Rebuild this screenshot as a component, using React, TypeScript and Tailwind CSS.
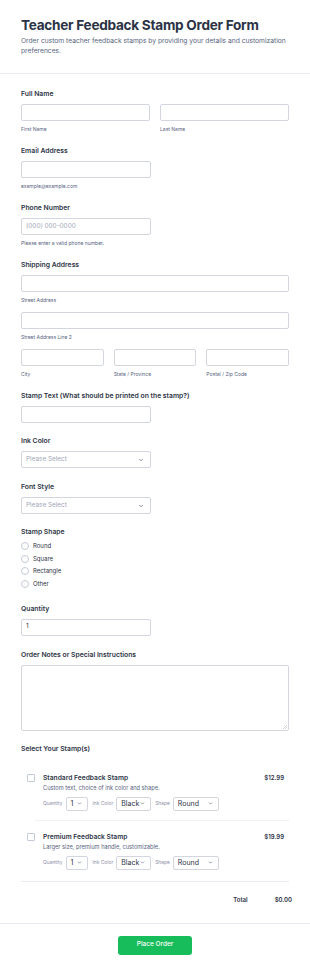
import { ChevronDown } from "lucide-react";

const font = { fontFamily: "Inter, 'Noto Sans', sans-serif" };

function Label({ children }: { children: React.ReactNode }) {
  return <div className="mb-[5px] text-[6.8px] font-semibold leading-[10px] text-[#2c3345]">{children}</div>;
}

function Sub({ children }: { children: React.ReactNode }) {
  return <div className="mt-[4px] text-[5px] leading-[8px] text-[#57647e]">{children}</div>;
}

function Box({ className = "", children }: { className?: string; children?: React.ReactNode }) {
  return (
    <div className={`h-[17px] rounded-[2px] border border-[#d3d6e0] bg-white ${className}`}>{children}</div>
  );
}

function SelectBox({ text }: { text: string }) {
  return (
    <Box className="flex w-[130px] items-center justify-between pl-[4px] pr-[6px]">
      <span className="text-[6.4px] text-[#a0a6b6]">{text}</span>
      <ChevronDown className="h-[6px] w-[6px] text-[#57647e]" strokeWidth={3} />
    </Box>
  );
}

function MiniSelect({ text, w }: { text: string; w: string }) {
  return (
    <div className={`flex h-[14px] items-center justify-between rounded-[2px] border border-[#d3d6e0] bg-white pl-[4px] pr-[5px] ${w}`}>
      <span className="text-[7px] leading-none text-[#2c3345]">{text}</span>
      <ChevronDown className="h-[5px] w-[5px] text-[#57647e]" strokeWidth={3} />
    </div>
  );
}

function Product({ name, desc, price }: { name: string; desc: string; price: string }) {
  return (
    <div className="flex items-start gap-[8px] pl-[6px]">
      <div className="mt-[1px] h-[8px] w-[8px] shrink-0 rounded-[1px] border border-[#c3cad8] bg-white" />
      <div className="flex-1">
        <div className="flex justify-between pr-[5px]">
          <span className="text-[6.7px] font-semibold leading-[10px] text-[#2c3345]">{name}</span>
          <span className="text-[6px] font-semibold leading-[10px] text-[#2c3345]">{price}</span>
        </div>
        <div className="mt-[1px] text-[5.7px] leading-[8px] text-[#57647e]">{desc}</div>
        <div className="mt-[5px] flex items-center">
          <span className="mr-[3px] text-[4.9px] text-[#8d8fa8]">Quantity</span>
          <MiniSelect text="1" w="w-[22px]" />
          <span className="ml-[5px] mr-[3px] text-[4.9px] text-[#8d8fa8]">Ink Color</span>
          <MiniSelect text="Black" w="w-[35px]" />
          <span className="ml-[4px] mr-[3px] text-[4.9px] text-[#8d8fa8]">Shape</span>
          <MiniSelect text="Round" w="w-[46px]" />
        </div>
      </div>
    </div>
  );
}

export default function App() {
  return (
    <div className="min-h-[971px] w-[310px] bg-white" style={font}>
      <header className="px-[21px] pb-[17px] pt-[16px]">
        <h1 className="text-[13.6px] font-bold leading-[19px] tracking-[-0.02em] text-[#2c3345]">
          Teacher Feedback Stamp Order Form
        </h1>
        <p className="mt-[1px] text-[6.7px] leading-[10px] text-[#57647e]">
          Order custom teacher feedback stamps by providing your details and customization preferences.
        </p>
      </header>
      <div className="h-px bg-[#eaebf2]" />
      <main className="flex flex-col gap-[13px] px-[21px] pt-[15px]">
        <section>
          <Label>Full Name</Label>
          <div className="flex gap-[10px]">
            <div className="flex-1">
              <Box />
              <Sub>First Name</Sub>
            </div>
            <div className="flex-1">
              <Box />
              <Sub>Last Name</Sub>
            </div>
          </div>
        </section>
        <section>
          <Label>Email Address</Label>
          <Box className="w-[130px]" />
          <Sub>example@example.com</Sub>
        </section>
        <section>
          <Label>Phone Number</Label>
          <Box className="flex w-[130px] items-center px-[4px]">
            <span className="text-[6.4px] text-[#a0a6b6]">(000) 000-0000</span>
          </Box>
          <Sub>Please enter a valid phone number.</Sub>
        </section>
        <section>
          <Label>Shipping Address</Label>
          <Box />
          <Sub>Street Address</Sub>
          <Box className="mt-[8px]" />
          <Sub>Street Address Line 2</Sub>
          <div className="mt-[8px] grid grid-cols-3 gap-[10px]">
            <div>
              <Box />
              <Sub>City</Sub>
            </div>
            <div>
              <Box />
              <Sub>State / Province</Sub>
            </div>
            <div>
              <Box />
              <Sub>Postal / Zip Code</Sub>
            </div>
          </div>
        </section>
        <section>
          <Label>Stamp Text (What should be printed on the stamp?)</Label>
          <Box className="w-[130px]" />
        </section>
        <section>
          <Label>Ink Color</Label>
          <SelectBox text="Please Select" />
        </section>
        <section className="mt-[1px]">
          <Label>Font Style</Label>
          <SelectBox text="Please Select" />
        </section>
        <section className="pb-[3px]">
          <Label>Stamp Shape</Label>
          <div className="flex flex-col gap-[4.6px]">
            {["Round", "Square", "Rectangle", "Other"].map((s) => (
              <div key={s} className="flex h-[8px] items-center gap-[4px]">
                <div className="h-[8px] w-[8px] rounded-full border border-[#c3cad8]" />
                <span className="text-[6px] leading-[8px] text-[#2c3345]">{s}</span>
              </div>
            ))}
          </div>
        </section>
        <section>
          <Label>Quantity</Label>
          <Box className="flex w-[130px] items-center px-[4px]">
            <span className="text-[6.4px] text-[#2c3345]">1</span>
          </Box>
        </section>
        <section className="mt-[1px]">
          <Label>Order Notes or Special Instructions</Label>
          <div className="relative h-[66px] rounded-[2px] border border-[#d3d6e0]">
            <svg className="absolute bottom-[1px] right-[1px]" width="4" height="4" viewBox="0 0 4 4">
              <path d="M4 0L0 4M4 2L2 4" stroke="#b0b3c0" strokeWidth="0.6" />
            </svg>
          </div>
        </section>
        <section>
          <Label>Select Your Stamp(s)</Label>
          <div className="pt-[14px]">
            <Product name="Standard Feedback Stamp" desc="Custom text, choice of ink color and shape." price="$12.99" />
            <div className="mb-[11px] ml-[14px] mt-[9px] h-px bg-[#f0f1f5]" />
            <Product name="Premium Feedback Stamp" desc="Larger size, premium handle, customizable." price="$19.99" />
            <div className="mt-[11px] h-px bg-[#eaebf2]" />
            <div className="-mr-[3px] flex justify-end gap-[27px] pb-[18px] pt-[13px]">
              <span className="text-[6px] font-semibold leading-[10px] text-[#2c3345]">Total</span>
              <span className="text-[6px] font-semibold leading-[10px] text-[#2c3345]">$0.00</span>
            </div>
          </div>
        </section>
      </main>
      <div className="h-px bg-[#eaebf2]" />
      <div className="flex justify-center pt-[12px]">
        <button className="h-[19px] w-[74px] rounded-[3px] bg-[#18bd5b] text-[6.5px] font-medium text-white">
          Place Order
        </button>
      </div>
    </div>
  );
}
